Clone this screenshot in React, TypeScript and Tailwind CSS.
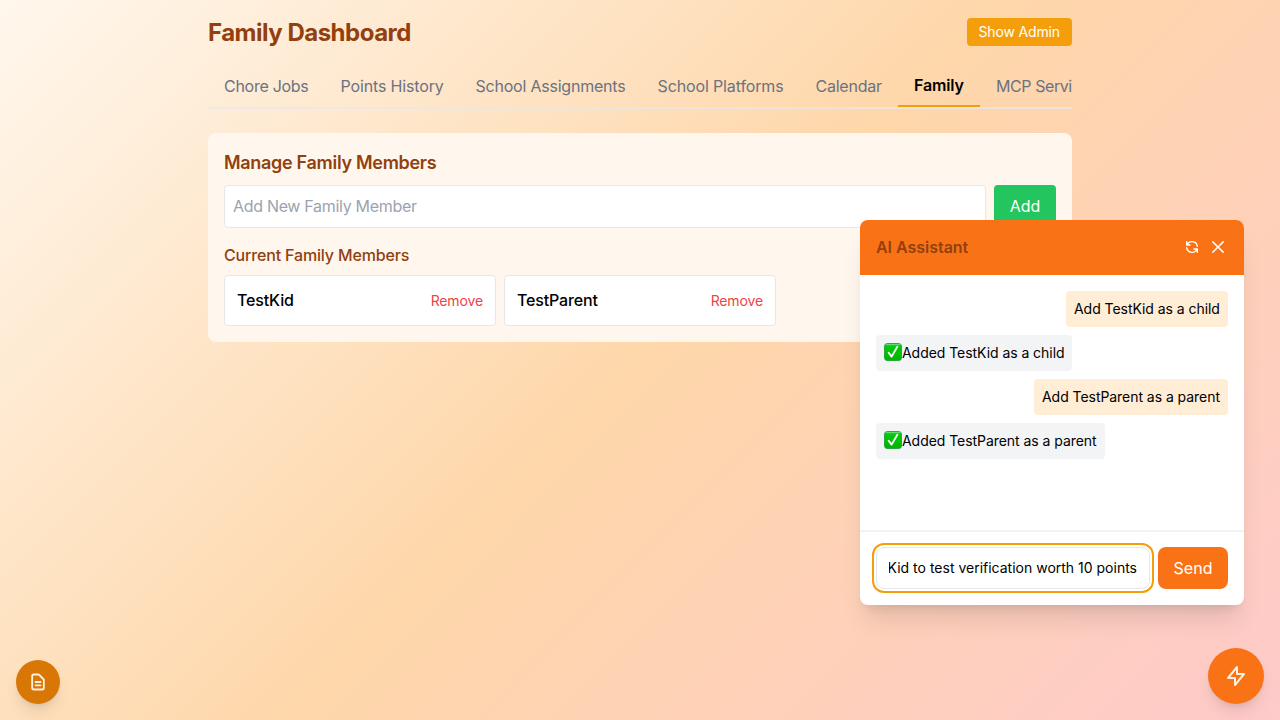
import { RxCross2 } from "react-icons/rx";

const tabs = [
  { label: "Chore Jobs", cls: "w-[116.5px] tracking-[-0.28px]" },
  { label: "Points History", cls: "w-[135px] tracking-[-0.15px]" },
  { label: "School Assignments", cls: "w-[182px] tracking-[-0.22px]" },
  { label: "School Platforms", cls: "w-[158px] tracking-[-0.13px]" },
  { label: "Calendar", cls: "w-[98.5px] tracking-[-0.24px]" },
  { label: "Family", cls: "w-[82px] tracking-[-0.15px]", active: true },
  { label: "MCP Services", cls: "w-[130px] tracking-[-0.42px]" },
];

const messages = [
  { from: "user", text: "Add TestKid as a child", width: "w-[162px]" },
  { from: "bot", text: "Added TestKid as a child", width: "w-[196px]" },
  { from: "user", text: "Add TestParent as a parent", width: "w-[194px]" },
  { from: "bot", text: "Added TestParent as a parent", width: "w-[229px]" },
];

function CheckMark() {
  return (
    <svg className="mt-[-1px] h-[18px] w-[18px] shrink-0" viewBox="0 0 18 18">
      <defs>
        <linearGradient id="check" x1="0" y1="0" x2="0" y2="1">
          <stop offset="0" stopColor="#20c83a" />
          <stop offset="0.25" stopColor="#00c80a" />
          <stop offset="1" stopColor="#00b400" />
        </linearGradient>
      </defs>
      <rect x="0.5" y="0.5" width="17" height="17" rx="2.8" fill="url(#check)" stroke="#189a2c" strokeWidth="0.8" />
      <path d="M1.5 1.6h15" stroke="#7be68a" strokeWidth="0.8" />
      <path d="M4.6 9.6l3 4 5.7-9.8" fill="none" stroke="#fff" strokeWidth="1.8" strokeLinecap="round" strokeLinejoin="round" />
    </svg>
  );
}

function MemberCard({ name }: { name: string }) {
  return (
    <div className="flex h-[51px] items-center justify-between rounded border border-[#e5e7eb] bg-white px-3">
      <span className="pb-px font-medium tracking-[-0.15px] text-black">{name}</span>
      <button className="pt-px text-sm tracking-[-0.13px] text-[#ef4444]">Remove</button>
    </div>
  );
}

export default function App() {
  return (
    <div className="relative h-[720px] w-[1280px] overflow-hidden bg-[linear-gradient(135deg,#fff7ed_0%,#fed7aa_50%,#fecaca_100%)] font-['Inter',sans-serif] text-base text-black">
      <main className="mx-auto flex w-[896px] flex-col px-4 pt-4">
        <header className="flex h-8 items-center justify-between">
          <h1 className="pt-0.5 text-2xl font-bold tracking-[-0.5px] text-[#92400e]">Family Dashboard</h1>
          <button className="h-7 w-[105.5px] rounded bg-[#f59e0b] text-sm tracking-[-0.15px] whitespace-nowrap text-white">Show Admin</button>
        </header>

        <nav className="mt-4 flex h-[45px] overflow-hidden border-b-2 border-[#e5e7eb]/75">
          {tabs.map((t) => (
            <button
              key={t.label}
              className={
                "flex h-[43px] shrink-0 items-center px-4 whitespace-nowrap " +
                t.cls +
                (t.active
                  ? " border-b-2 border-[#f59e0b] font-semibold text-black"
                  : " pt-px text-[#6b7280]")
              }
            >
              {t.label}
            </button>
          ))}
        </nav>

        <section className="mt-[23.5px] flex h-[209.5px] flex-col rounded-lg bg-[#fff7ed] p-4">
          <h2 className="h-7 text-lg leading-7 font-semibold tracking-[-0.3px] text-[#92400e]">Manage Family Members</h2>
          <div className="mt-2 flex h-[43px] gap-2">
            <input
              className="min-w-0 flex-1 rounded border border-[#e5e7eb] bg-white px-2 tracking-[-0.31px] placeholder:text-[#9ca3af]"
              placeholder="Add New Family Member"
            />
            <button className="w-[62px] rounded bg-[#22c55e] tracking-[-0.1px] text-white">Add</button>
          </div>
          <h3 className="mt-[15px] h-6 leading-6 font-medium tracking-[-0.16px] text-[#92400e]">Current Family Members</h3>
          <div className="mt-2 grid grid-cols-3 gap-2">
            <MemberCard name="TestKid" />
            <MemberCard name="TestParent" />
          </div>
        </section>
      </main>

      <aside className="absolute top-[220px] left-[860px] flex h-[385px] w-96 flex-col overflow-hidden rounded-lg bg-white shadow-xl">
        <div className="flex h-[54.5px] shrink-0 items-center justify-between bg-[#f97316] px-4">
          <h3 className="font-semibold tracking-[-0.03px] text-[#92400e]">AI Assistant</h3>
          <div className="flex items-center gap-2 text-white">
            <svg className="h-4 w-4" viewBox="0 0 24 24" fill="none" stroke="currentColor" strokeWidth="2" strokeLinecap="round" strokeLinejoin="round">
              <path d="M4 4v5h.582m15.356 2A8.001 8.001 0 004.582 9m0 0H9m11 11v-5h-.581m0 0a8.003 8.003 0 01-15.357-2m15.357 2H15" />
            </svg>
            <RxCross2 className="h-5 w-5" />
          </div>
        </div>
        <div className="flex flex-1 flex-col gap-2 p-4">
          {messages.map((m) => (
            <div
              key={m.text}
              className={
                "flex h-9 items-center rounded px-2 text-sm tracking-[-0.05px] whitespace-nowrap " +
                m.width +
                (m.from === "user" ? " self-end bg-[#ffedd5]" : " self-start bg-[#f3f4f6]")
              }
            >
              {m.from === "bot" && <CheckMark />}
              <span>{m.text}</span>
            </div>
          ))}
        </div>
        <div className="flex h-[75px] shrink-0 gap-2 border-t-2 border-[#f1f2f4] px-4 pt-[15px]">
          <div className="flex h-[42px] w-[274px] items-center rounded-lg border border-[#e5e7eb] px-3 text-sm outline-2 outline-offset-2 outline-[#f59e0b]">
            <div className="flex w-full justify-end overflow-hidden whitespace-nowrap">
              <span>Kid to test verification worth 10 points</span>
            </div>
          </div>
          <button className="h-[42px] w-[70px] rounded-lg bg-[#f97316] text-white">Send</button>
        </div>
      </aside>

      <button className="absolute top-[660px] left-4 flex h-11 w-11 items-center justify-center rounded-full bg-[#d97706] text-[#fff0dc] shadow-lg">
        <svg className="h-5 w-5" viewBox="0 0 24 24" fill="none" stroke="currentColor" strokeWidth="2.2" strokeLinecap="round" strokeLinejoin="round">
          <path d="M9 12h6m-6 4h6m2 5H7a2 2 0 01-2-2V5a2 2 0 012-2h5.586a1 1 0 01.707.293l5.414 5.414a1 1 0 01.293.707V19a2 2 0 01-2 2z" />
        </svg>
      </button>
      <button className="absolute top-[648px] left-[1208px] flex h-14 w-14 items-center justify-center rounded-full bg-[#f97316] text-[#fff0e0] shadow-lg">
        <svg className="h-6 w-6" viewBox="0 0 24 24" fill="none" stroke="currentColor" strokeWidth="2" strokeLinecap="round" strokeLinejoin="round">
          <path d="M13 10V3L4 14h7v7l9-11h-7z" />
        </svg>
      </button>
    </div>
  );
}
